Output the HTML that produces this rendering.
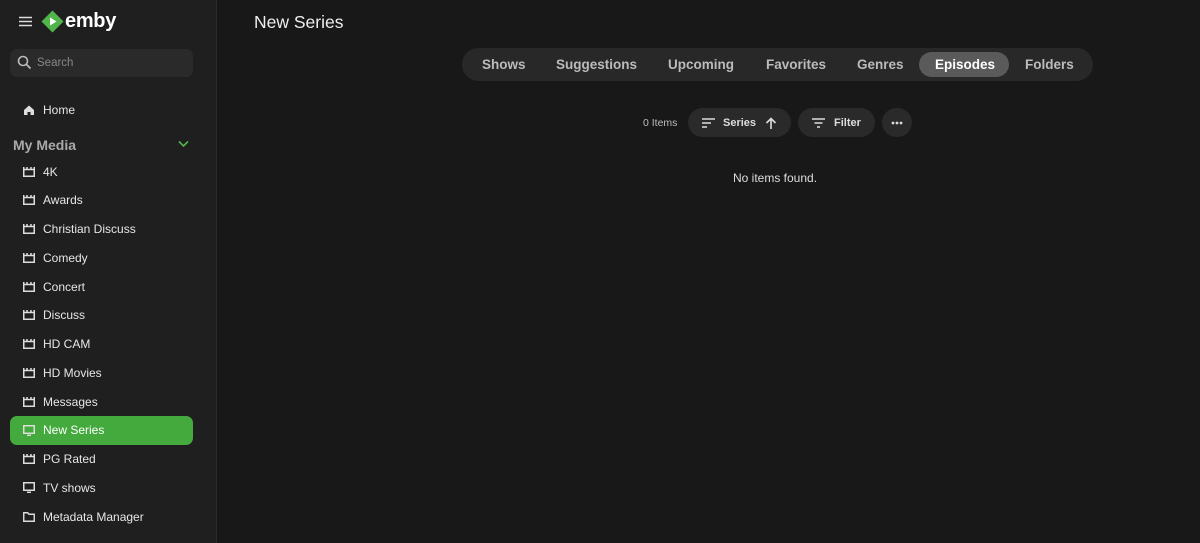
<!DOCTYPE html>
<html><head><style>
*{margin:0;padding:0;box-sizing:border-box}
body{width:1200px;height:543px;background:#181818;font-family:"Liberation Sans",sans-serif;color:#ddd;position:relative;overflow:hidden}
.side{position:absolute;left:0;top:0;width:217px;height:543px;background:#1f1f1f;border-right:1px solid #2a2a2a}
.abs{position:absolute}
.item{position:absolute;left:10px;width:183px;height:29px;display:flex;align-items:center;padding-left:13px;font-size:12px;color:#e6e6e6}
.item svg{margin-right:8px}
.act{background:#44aa3d;border-radius:7px;color:#fff}
.tabs{position:absolute;left:462px;top:48px;width:631px;height:33px;background:#282828;border-radius:17px}
.tab{position:absolute;top:0;height:33px;line-height:33px;font-size:13.5px;color:#bbb;font-weight:bold}
.btn{position:absolute;top:108px;height:29px;background:#2a2a2a;border-radius:15px;display:flex;align-items:center;font-size:11px;font-weight:bold;color:#ddd}
</style></head><body>
<div class="side">
<svg class="abs" style="left:19px;top:16px" width="13" height="11"><path d="M0 1.5h13M0 5.5h13M0 9.5h13" stroke="#ddd" stroke-width="1.6"/></svg>
<svg class="abs" style="left:41px;top:10px" width="23" height="23"><path d="M11.5 0.5L22.5 11.5L11.5 22.5L0.5 11.5Z" fill="#52b54b"/><path d="M9 7.5v8l6.5-4z" fill="#fff"/></svg>
<div class="abs" style="left:65px;top:10px;font-size:20px;font-weight:bold;color:#fff;letter-spacing:-0.3px">emby</div>
<div class="abs" style="left:10px;top:49px;width:183px;height:28px;background:#2a2a2a;border-radius:7px"></div>
<svg class="abs" style="left:17px;top:55px" width="15" height="15"><circle cx="6" cy="6" r="4.5" stroke="#bbb" stroke-width="1.6" fill="none"/><path d="M9.5 9.5l4 4" stroke="#bbb" stroke-width="1.8"/></svg>
<div class="abs" style="left:37px;top:57px;font-size:11.5px;color:#888">Search</div>
<div class="item" style="top:95px"><svg width="12" height="12"><path d="M1 6L6 1.5L11 6V11H7.5V8H4.5V11H1Z" fill="#ddd"/></svg>Home</div>
<div class="abs" style="left:13px;top:137px;font-size:14px;font-weight:bold;color:#aaa">My Media</div>
<svg class="abs" style="left:178px;top:140px" width="11" height="8"><path d="M1 1.5l4.5 4.5l4.5-4.5" stroke="#52b54b" stroke-width="1.6" fill="none"/></svg>
<div id="list"></div>
</div>
<div class="abs" style="left:254px;top:12px;font-size:17.5px;color:#eee">New Series</div>
<div class="tabs">
<div class="tab" style="left:20px">Shows</div>
<div class="tab" style="left:94px">Suggestions</div>
<div class="tab" style="left:206px">Upcoming</div>
<div class="tab" style="left:304px">Favorites</div>
<div class="tab" style="left:395px">Genres</div>
<div class="abs" style="left:457px;top:4px;width:90px;height:25px;background:#5a5a5a;border-radius:13px"></div>
<div class="tab" style="left:473px;color:#fff">Episodes</div>
<div class="tab" style="left:563px">Folders</div>
</div>
<div class="abs" style="left:643px;top:117px;font-size:10.5px;color:#bbb">0 Items</div>
<div class="btn" style="left:688px;width:103px"><svg style="margin:0 8px 0 14px" width="13" height="10"><path d="M0 1h13M0 5h9M0 9h5" stroke="#ddd" stroke-width="1.5"/></svg>Series<svg style="margin-left:9px" width="12" height="12"><path d="M6 12V1.5M1.5 6L6 1.5L10.5 6" stroke="#ddd" stroke-width="1.6" fill="none"/></svg></div>
<div class="btn" style="left:798px;width:77px"><svg style="margin:0 9px 0 14px" width="13" height="10"><path d="M0 1h13M2.5 5h8M5 9h3" stroke="#ddd" stroke-width="1.5"/></svg>Filter</div>
<div class="btn" style="left:882px;width:30px;justify-content:center"><svg width="12" height="4"><circle cx="2" cy="2" r="1.4" fill="#ddd"/><circle cx="6" cy="2" r="1.4" fill="#ddd"/><circle cx="10" cy="2" r="1.4" fill="#ddd"/></svg></div>
<div class="abs" style="left:733px;top:171px;font-size:12px;color:#ddd">No items found.</div>
<script>
var n=["4K","Awards","Christian Discuss","Comedy","Concert","Discuss","HD CAM","HD Movies","Messages","New Series","PG Rated","TV shows","Metadata Manager"];
var film='<svg width="12" height="10"><rect x="0.75" y="2.5" width="10.5" height="6.75" fill="none" stroke="#ddd" stroke-width="1.5"/><path d="M0.75 0v2.5M4 0v2.5M8 0v2.5M11.25 0v2.5" stroke="#ddd" stroke-width="1.5"/></svg>';
var tv='<svg width="12" height="11"><rect x="0.75" y="0.75" width="10.5" height="7.5" fill="none" stroke="#ddd" stroke-width="1.5"/><path d="M4 10.3h4" stroke="#ddd" stroke-width="1.5"/></svg>';
var fold='<svg width="12" height="10"><path d="M0.75 0.75h4l1.2 1.5h5.3v7h-10.5z" fill="none" stroke="#ddd" stroke-width="1.4"/></svg>';
var h='';n.forEach(function(t,i){var ic=(t=="New Series"||t=="TV shows")?tv:(t=="Metadata Manager"?fold:film);
h+='<div class="item'+(t=="New Series"?' act':'')+'" style="top:'+(157+i*28.75)+'px">'+ic+t+'</div>';});
document.getElementById('list').innerHTML=h;
</script>
</body></html>
